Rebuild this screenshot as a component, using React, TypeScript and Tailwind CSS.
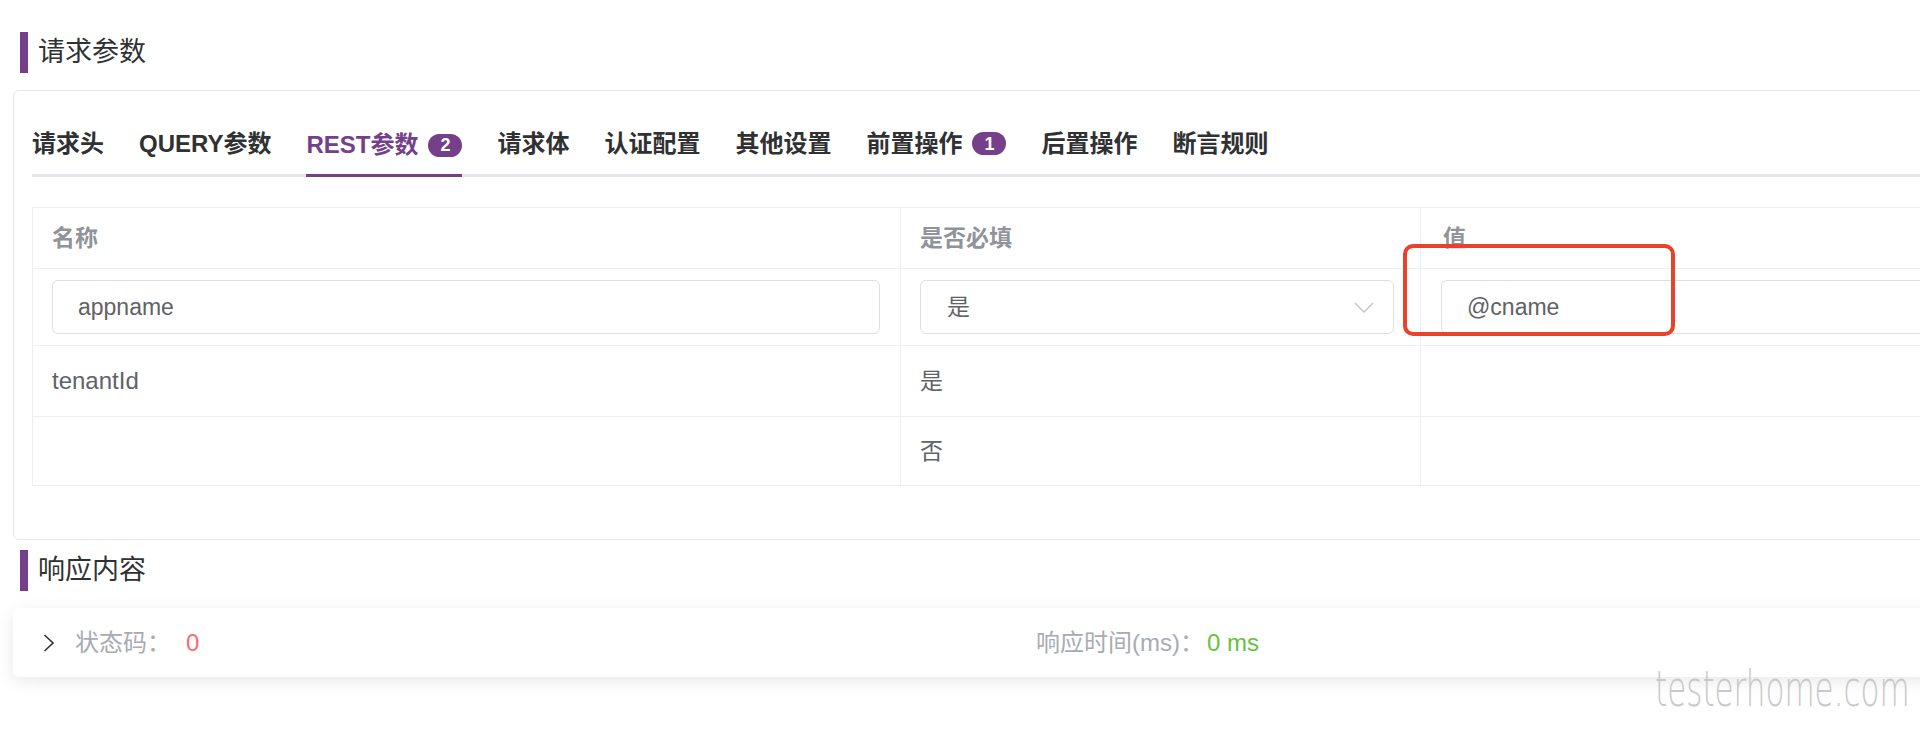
import React from "react";

const tabs: { label: string; badge?: string; active?: boolean }[] = [
  { label: "请求头" },
  { label: "QUERY参数" },
  { label: "REST参数", badge: "2", active: true },
  { label: "请求体" },
  { label: "认证配置" },
  { label: "其他设置" },
  { label: "前置操作", badge: "1" },
  { label: "后置操作" },
  { label: "断言规则" },
];

function SectionTitle({ text }: { text: string }) {
  return (
    <div className="flex items-center ml-[20px]">
      <div className="w-[8px] h-[41px] bg-[#74408a]" />
      <span className="ml-[10px] text-[27px] leading-none text-[#303133]">{text}</span>
    </div>
  );
}

function Chevron() {
  return (
    <svg width="20" height="11" viewBox="0 0 20 11" fill="none">
      <path d="M1 1 L10 10 L19 1" stroke="#c0c4cc" strokeWidth="1.4" />
    </svg>
  );
}

export default function App() {
  return (
    <div className="relative w-[1920px] h-[733px] overflow-hidden bg-white font-['Liberation_Sans','Noto_Sans_CJK_SC',sans-serif]">
      <div className="pt-[32px]">
        <SectionTitle text="请求参数" />
      </div>

      {/* request card */}
      <div className="mt-[17px] ml-[13px] w-[1940px] h-[450px] border border-[#e4e7ed] rounded-[6px] pl-[18px] pt-[22px]">
        <div className="flex gap-[35px] border-b-[3px] border-[#e4e7ed] h-[64px]">
          {tabs.map((t) => (
            <div
              key={t.label}
              className={
                t.active
                  ? "flex items-center h-[64px] border-b-[3px] border-[#74408a] text-[#74408a] text-[24px] font-semibold"
                  : "flex items-center h-[61px] text-[#303133] text-[24px] font-semibold"
              }
            >
              <span className={t.active ? "mt-[3px]" : ""}>{t.label}</span>
              {t.badge && (
                <span className={"ml-[10px] h-[23px] w-[34px] rounded-full bg-[#74408a] text-white text-[18px] font-bold flex items-center justify-center leading-none " + (t.active ? "mt-[3px]" : "")}>
                  {t.badge}
                </span>
              )}
            </div>
          ))}
        </div>

        {/* table */}
        <div className="mt-[30px] w-[1920px] border border-[#ebeef5] grid grid-cols-[868px_520px_1fr] text-[23px] text-[#606266]">
          {/* header */}
          <div className="h-[61px] flex items-center pl-[19px] border-b border-[#ebeef5] border-r text-[#909399] font-bold">名称</div>
          <div className="h-[61px] flex items-center pl-[19px] border-b border-[#ebeef5] border-r text-[#909399] font-bold">是否必填</div>
          <div className="h-[61px] flex items-center pl-[22px] border-b border-[#ebeef5] text-[#909399] font-bold">值</div>

          {/* row 1 */}
          <div className="h-[77px] flex items-center pl-[19px] pr-[20px] border-b border-r border-[#ebeef5]">
            <div className="w-full h-[54px] border border-[#dcdfe6] rounded-[6px] flex items-center pl-[25px]">appname</div>
          </div>
          <div className="h-[77px] flex items-center pl-[19px] pr-[26px] border-b border-r border-[#ebeef5]">
            <div className="w-full h-[54px] border border-[#dcdfe6] rounded-[6px] flex items-center justify-between pl-[26px] pr-[19px]">
              <span>是</span>
              <Chevron />
            </div>
          </div>
          <div className="h-[77px] flex items-center pl-[20px] border-b border-[#ebeef5]">
            <div className="w-full h-[54px] border border-[#dcdfe6] rounded-l-[6px] border-r-0 flex items-center pl-[25px]">@cname</div>
          </div>

          {/* row 2 */}
          <div className="h-[71px] flex items-center pl-[19px] border-b border-r border-[#ebeef5] text-[24px]">tenantId</div>
          <div className="h-[71px] flex items-center pl-[19px] border-b border-r border-[#ebeef5]">是</div>
          <div className="h-[71px] border-b border-[#ebeef5]" />

          {/* row 3 */}
          <div className="h-[68px] border-r border-[#ebeef5]" />
          <div className="h-[68px] flex items-center pl-[19px] border-r border-[#ebeef5]">否</div>
          <div className="h-[68px]" />
        </div>
      </div>

      <div className="mt-[10px]">
        <SectionTitle text="响应内容" />
      </div>

      {/* response card */}
      <div className="mt-[17px] ml-[13px] w-[1940px] h-[69px] bg-white rounded-[6px] shadow-[0_4px_18px_rgba(0,0,0,0.09)] flex items-center pl-[30px] text-[24px]">
        <svg className="shrink-0" width="12" height="18" viewBox="0 0 12 18" fill="none">
          <path d="M1.5 1 L10 9 L1.5 17" stroke="#303133" strokeWidth="1.6" />
        </svg>
        <span className="ml-[20px] w-[111px] shrink-0 text-[#a8abb2]">状态码：</span>
        <span className="w-[850px] shrink-0 text-[#f56c6c]">0</span>
        <span className="w-[171px] shrink-0 text-[#a8abb2]">响应时间(ms)：</span>
        <span className="text-[#67c23a]">0 ms</span>
      </div>

      {/* annotation box */}
      <div className="absolute left-[1403px] top-[244px] w-[272px] h-[92px] border-[4px] border-[#e8412c] rounded-[10px]" />

      {/* watermark */}
      <div className="absolute left-[1655px] top-[664px] text-[50px] leading-none font-extralight text-[#c8c8c8] origin-left scale-x-[0.62] whitespace-nowrap font-['DejaVu_Sans',sans-serif]">
        testerhome.com
      </div>
    </div>
  );
}
